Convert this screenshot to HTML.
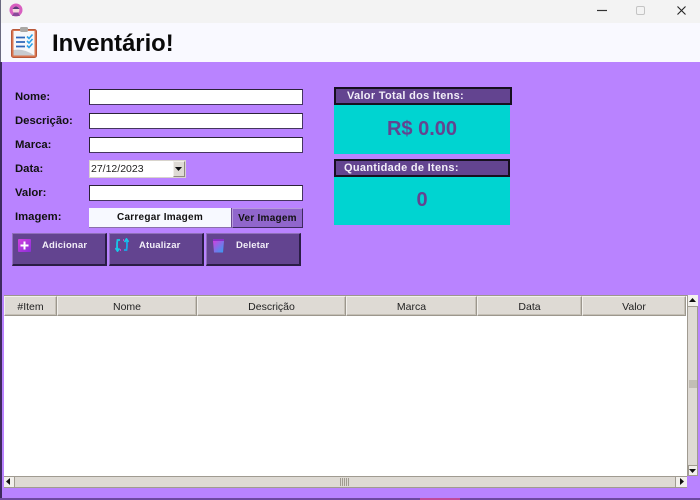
<!DOCTYPE html>
<html><head><meta charset="utf-8">
<style>
html,body{margin:0;padding:0}
body{width:700px;height:500px;overflow:hidden;position:relative;background:#b983ff;font-family:"Liberation Sans",Arial,sans-serif}
div{position:absolute;box-sizing:border-box;white-space:nowrap}
.l{left:15px;font:bold 11.3px/14px "Liberation Sans",sans-serif;color:#111;margin-top:1px}
.i{left:89px;width:214px;height:16px;background:#fff;border:1px solid #2c2238;border-bottom-color:#453560;border-right-color:#453560}
.b{top:233px;height:33px;background:#634490;border:1px solid;border-color:#8f70ba #2a1d45 #2a1d45 #8f70ba;border-width:1px 2px 2px 1px;color:#f2eef8;font:bold 9.5px/12px "Liberation Sans",sans-serif}
.b span{position:absolute;top:6px}
.h{top:296px;height:20px;background:#dedad4;border:1px solid;border-color:#f2f0ec #9c978d #9c978d #f2f0ec;box-shadow:inset -1px -1px 0 #c5c0b6;text-align:center;font:10.5px/20px "Liberation Sans",sans-serif;color:#222}
.t{background:#634490;border:2px solid #16101f;color:#f2eef8;font:bold 11px/15px "Liberation Sans",sans-serif;letter-spacing:.3px}
.c{background:#00d4d1;color:#634490;font-weight:bold;text-align:center;left:334px;width:176px}
.s{background:#dedad4}
</style></head><body>
<!-- window chrome -->
<div style="left:0;top:0;width:700px;height:23px;background:#f3f3f3"></div>
<div style="left:0;top:23px;width:700px;height:39px;background:#f9f9ff"></div>
<div style="left:0;top:0;width:1px;height:62px;background:#6a6a80"></div>
<div style="left:0;top:62px;width:2px;height:437px;background:#3d2a5e"></div>
<div style="left:0;top:498px;width:700px;height:2px;background:#6d49a0"></div>
<div style="left:420px;top:498px;width:40px;height:2px;background:#c04a9a"></div>
<svg style="position:absolute;left:9px;top:3px" width="14" height="14" viewBox="0 0 14 14"><circle cx="7" cy="7" r="6.500" fill="#d85fc0"/><circle cx="7" cy="7" r="3.400" fill="#f5d8dc"/><path d="M3 13h8l-2-3.500H5z" fill="#8a4a9a"/><path d="M3.500 6Q7 1 10.500 6" fill="#5a3a7a"/></svg>
<svg style="position:absolute;left:595px;top:5px" width="100" height="14" viewBox="0 0 100 14"><path d="M2 5.500h10" stroke="#333" stroke-width="1.200"/><rect x="41.500" y="1.500" width="8" height="8" rx="1.500" fill="none" stroke="#c4c4c4"/><path d="M82.500 1.500l8 8M90.500 1.500l-8 8" stroke="#222" stroke-width="1.100"/></svg>
<!-- clipboard icon -->
<svg style="position:absolute;left:10px;top:26px" width="29" height="33" viewBox="0 0 29 33">
<rect x="1.500" y="3.500" width="25" height="28" rx="2" fill="#d9754f" stroke="#b8583a"/>
<rect x="3.500" y="5" width="21" height="24.500" fill="#f5f7fa"/>
<path d="M3.500 24Q14 22 24.500 29.500H3.500z" fill="#c8cbd0"/>
<rect x="10" y="1" width="8" height="5" rx="1.500" fill="#a9a7a4"/>
<path d="M6 11.500h9M6 16h9M6 20.500h9" stroke="#2e66b8" stroke-width="1.800"/>
<path d="M17 10.500l2 2 3.500-4M17 15l2 2 3.500-4M17 19.500l2 2 3.500-4" fill="none" stroke="#2aa0e8" stroke-width="1.600"/>
</svg>
<div style="left:52px;top:30px;font:bold 23.800px/28px 'Liberation Sans',sans-serif;color:#0a0a0a">Inventário!</div>
<!-- form -->
<div class="l" style="top:89px">Nome:</div><div class="i" style="top:89px"></div>
<div class="l" style="top:113px">Descrição:</div><div class="i" style="top:113px"></div>
<div class="l" style="top:137px">Marca:</div><div class="i" style="top:137px"></div>
<div class="l" style="top:161px">Data:</div>
<div style="left:89px;top:160px;width:97px;height:18px;background:#fff;border:1px solid #d8d4cc;font:10.500px/17px 'Liberation Sans',sans-serif;color:#222;padding-left:1px">27/12/2023</div>
<div style="left:173px;top:161px;width:12px;height:16px;background:#dedad4;border:1px solid;border-color:#f2f0ec #8f8a80 #8f8a80 #f2f0ec"></div>
<svg style="position:absolute;left:175px;top:167px" width="8" height="5"><path d="M0 0h7L3.500 4z" fill="#111"/></svg>
<div class="l" style="top:185px">Valor:</div><div class="i" style="top:185px"></div>
<div class="l" style="top:209px">Imagem:</div>
<div style="left:89px;top:208px;width:143px;height:20px;background:#f7f9ff;border-right:1px solid #6a4a90;border-bottom:1px solid #8a70aa;text-align:center;font:bold 10px/20px 'Liberation Sans',sans-serif;color:#111;letter-spacing:.25px">Carregar Imagem</div>
<div style="left:232px;top:208px;width:71px;height:20px;background:#9066cc;border:1px solid;border-color:#b79ade #3d2a5e #3d2a5e #b79ade;text-align:center;font:bold 10px/19px 'Liberation Sans',sans-serif;color:#111;letter-spacing:.25px">Ver Imagem</div>
<!-- buttons -->
<div class="b" style="left:12px;width:95px"><span style="left:29px;letter-spacing:.15px">Adicionar</span></div>
<svg style="position:absolute;left:18px;top:239px" width="13" height="13"><defs><linearGradient id="p" x1="0" y1="0" x2="1" y2="1"><stop offset="0" stop-color="#d33fe0"/><stop offset="1" stop-color="#8a30d8"/></linearGradient></defs><rect width="13" height="13" rx="1" fill="url(#p)"/><path d="M6.500 2.500v8M2.500 6.500h8" stroke="#fff" stroke-width="2"/></svg>
<div class="b" style="left:109px;width:95px"><span style="left:29px;letter-spacing:.15px">Atualizar</span></div>
<svg style="position:absolute;left:115px;top:238px" width="14" height="14" fill="none" stroke-width="1.800"><path d="M5 2H2.500Q1.500 7 2.500 12" stroke="#18c8e8"/><path d="M.5 10l2 3 2-2.500" stroke="#18c8e8"/><path d="M9 12h2.500Q12.500 7 11.500 2" stroke="#18a8e8"/><path d="M9.500 4l2-3 2 3" stroke="#18c8e8"/><path d="M5 12h1M8 2h1" stroke="#e040d0"/></svg>
<div class="b" style="left:206px;width:95px"><span style="left:29px;letter-spacing:.15px">Deletar</span></div>
<svg style="position:absolute;left:212px;top:238px" width="13" height="15"><defs><linearGradient id="d" x1="0" y1="0" x2="1" y2="1"><stop offset="0" stop-color="#d040e0"/><stop offset="1" stop-color="#30a0f0"/></linearGradient></defs><path d="M1 3h11l-1 11.500H2z" fill="url(#d)"/><rect x="1" y="1" width="11" height="2" fill="#8a30c8"/></svg>
<!-- totals -->
<div class="t" style="left:334px;top:87px;width:178px;height:18px;padding-left:11px">Valor Total dos Itens:</div>
<div class="c" style="top:105px;height:49px;font-size:20px;line-height:48px">R$ 0.00</div>
<div class="t" style="left:334px;top:159px;width:176px;height:18px;padding-left:8px">Quantidade de Itens:</div>
<div class="c" style="top:177px;height:48px;font-size:20px;line-height:47px">0</div>
<!-- table -->
<div style="left:4px;top:295px;width:683px;height:181px;background:#fff;border-top:1px solid #9c978d"></div>
<div class="h" style="left:4px;width:53px">#Item</div>
<div class="h" style="left:57px;width:140px">Nome</div>
<div class="h" style="left:197px;width:149px">Descrição</div>
<div class="h" style="left:346px;width:131px">Marca</div>
<div class="h" style="left:477px;width:105px">Data</div>
<div class="h" style="left:582px;width:104px">Valor</div>
<!-- v scroll -->
<div class="s" style="left:687px;top:295px;width:11px;height:181px;border-left:1px solid #a09b91;border-right:1px solid #a09b91"></div>
<div style="left:688px;top:295px;width:10px;height:12px;background:#f2f0ec;border-bottom:1px solid #a09b91"></div>
<svg style="position:absolute;left:689px;top:298px" width="8" height="5"><path d="M0 4h7L3.500 0z" fill="#111"/></svg>
<div style="left:689px;top:380px;width:8px;height:8px;background:#c2bdb5"></div>
<div style="left:688px;top:465px;width:10px;height:11px;background:#f2f0ec;border:1px solid #a09b91"></div>
<svg style="position:absolute;left:689px;top:469px" width="8" height="5"><path d="M0 0h7L3.500 4z" fill="#111"/></svg>
<!-- h scroll -->
<div class="s" style="left:4px;top:476px;width:683px;height:12px;border-top:1px solid #a09b91;border-bottom:1px solid #a09b91"></div>
<div style="left:4px;top:477px;width:11px;height:10px;background:#f2f0ec;border-right:1px solid #a09b91"></div>
<svg style="position:absolute;left:6px;top:478px" width="5" height="8"><path d="M4 0v7L0 3.500z" fill="#111"/></svg>
<div style="left:675px;top:477px;width:12px;height:10px;background:#f2f0ec;border-left:1px solid #a09b91"></div>
<svg style="position:absolute;left:680px;top:478px" width="5" height="8"><path d="M0 0v7l4-3.500z" fill="#111"/></svg>
<div style="left:340px;top:478px;width:9px;height:8px;background:repeating-linear-gradient(90deg,#a09b91 0 1px,#dedad4 1px 2px)"></div>
</body></html>
